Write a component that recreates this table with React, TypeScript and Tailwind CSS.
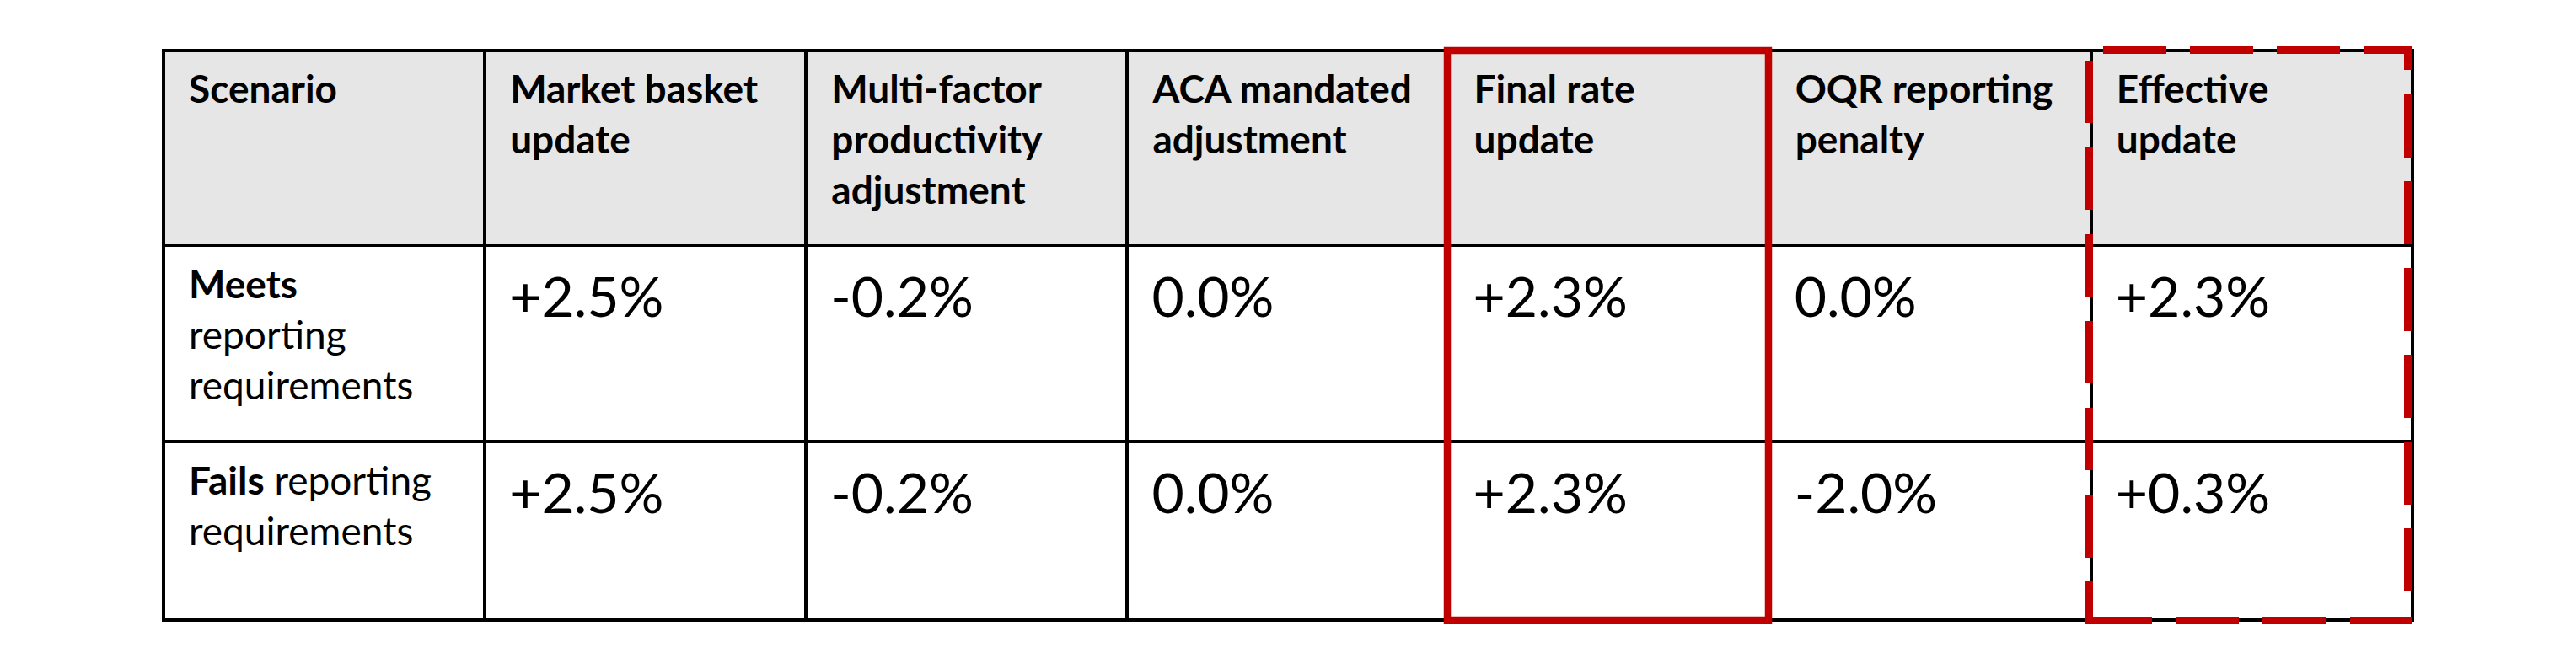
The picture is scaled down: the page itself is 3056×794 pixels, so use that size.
import React from "react";

const RED = "#c00000";

const headers: string[][] = [
  ["Scenario"],
  ["Market basket", "update"],
  ["Multi-factor", "productivity", "adjustment"],
  ["ACA mandated", "adjustment"],
  ["Final rate", "update"],
  ["OQR reporting", "penalty"],
  ["Effective", "update"],
];

const rows = [
  {
    label: (
      <>
        <span className="font-bold">Meets</span>
        <br />
        reporting
        <br />
        requirements
      </>
    ),
    values: ["+2.5%", "-0.2%", "0.0%", "+2.3%", "0.0%", "+2.3%"],
    height: "h-[233px]",
  },
  {
    label: (
      <>
        <span className="font-bold">Fails</span> reporting
        <br />
        requirements
      </>
    ),
    values: ["+2.5%", "-0.2%", "0.0%", "+2.3%", "-2.0%", "+0.3%"],
    height: "h-[212px]",
  },
];

// dashed outline around the "Effective update" column, dash by dash
const dashes: [number, number, number, number][] = [
  // top
  [2495, 55, 75, 9], [2598, 55, 75, 9], [2701, 55, 75, 9], [2804, 55, 57, 9],
  // right
  [2852, 55, 9, 28], [2852, 112, 9, 75], [2852, 215, 9, 75], [2852, 318, 9, 75],
  [2852, 421, 9, 75], [2852, 524, 9, 75], [2852, 627, 9, 75],
  // bottom
  [2473, 732, 80, 9], [2582, 732, 74, 9], [2684, 732, 75, 9], [2788, 732, 73, 9],
  // left
  [2474, 72, 9, 74], [2474, 175, 9, 74], [2474, 278, 9, 74], [2474, 381, 9, 74],
  [2474, 484, 9, 74], [2474, 587, 9, 75], [2474, 690, 9, 51],
];

function Highlights() {
  return (
    <svg
      className="absolute inset-0 pointer-events-none"
      width={3056}
      height={794}
      viewBox="0 0 3056 794"
    >
      <rect x={1717} y={60} width={381} height={676} fill="none" stroke={RED} strokeWidth={8.5} />
      {dashes.map(([x, y, w, h], i) => (
        <rect key={i} x={x} y={y} width={w} height={h} fill={RED} />
      ))}
    </svg>
  );
}

export default function App() {
  return (
    <div className="relative w-[3056px] h-[794px] bg-white text-black [font-family:Lato,'Open_Sans',sans-serif]">
      <div className="pl-[192px] pt-[58px]">
        <div className="w-[2672px] grid grid-cols-7 border-l-4 border-t-4 border-black">
          {headers.map((lines, i) => (
            <div
              key={i}
              className="h-[231px] bg-[#e7e6e6] border-r-4 border-b-4 border-black pl-[28px] pt-[13px] text-[46px] leading-[60px] font-bold whitespace-nowrap"
            >
              {lines.map((l, j) => (
                <div key={j}>{l}</div>
              ))}
            </div>
          ))}
          {rows.map((row, r) => (
            <React.Fragment key={r}>
              <div
                className={`${row.height} border-r-4 border-b-4 border-black pl-[28px] pt-[14px] text-[46px] leading-[60px] whitespace-nowrap`}
              >
                {row.label}
              </div>
              {row.values.map((v, c) => (
                <div
                  key={c}
                  className={`${row.height} border-r-4 border-b-4 border-black pl-[27px] pt-[25px] text-[66px] leading-none`}
                >
                  {v}
                </div>
              ))}
            </React.Fragment>
          ))}
        </div>
      </div>
      <Highlights />
    </div>
  );
}
